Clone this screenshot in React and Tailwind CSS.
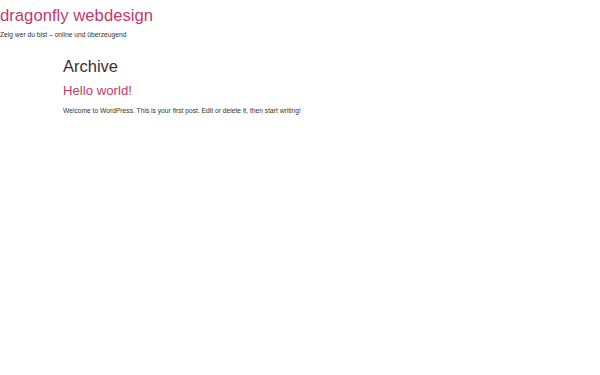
export default function App() {
  return (
    <div className="min-h-[375px] w-[600px] bg-white" style={{ fontFamily: '"Liberation Sans", Arial, sans-serif' }}>
      <header className="pt-[6px]">
        <h1 className="text-[16.7px] leading-[20px] text-[#c23a6c]">dragonfly webdesign</h1>
        <p className="mt-[4px] text-[6.7px] leading-[9px] text-[#333]">Zeig wer du bist – online und überzeugend</p>
      </header>
      <main className="ml-[63px] mt-[17px]">
        <h2 className="text-[16.5px] leading-[20px] text-[#333]">Archive</h2>
        <article className="mt-[7px]">
          <h3 className="text-[13.2px] leading-[16px] text-[#c23a6c]">Hello world!</h3>
          <p className="mt-[7px] text-[6.7px] leading-[9px] text-[#333]">Welcome to WordPress. This is your first post. Edit or delete it, then start writing!</p>
        </article>
      </main>
    </div>
  );
}
